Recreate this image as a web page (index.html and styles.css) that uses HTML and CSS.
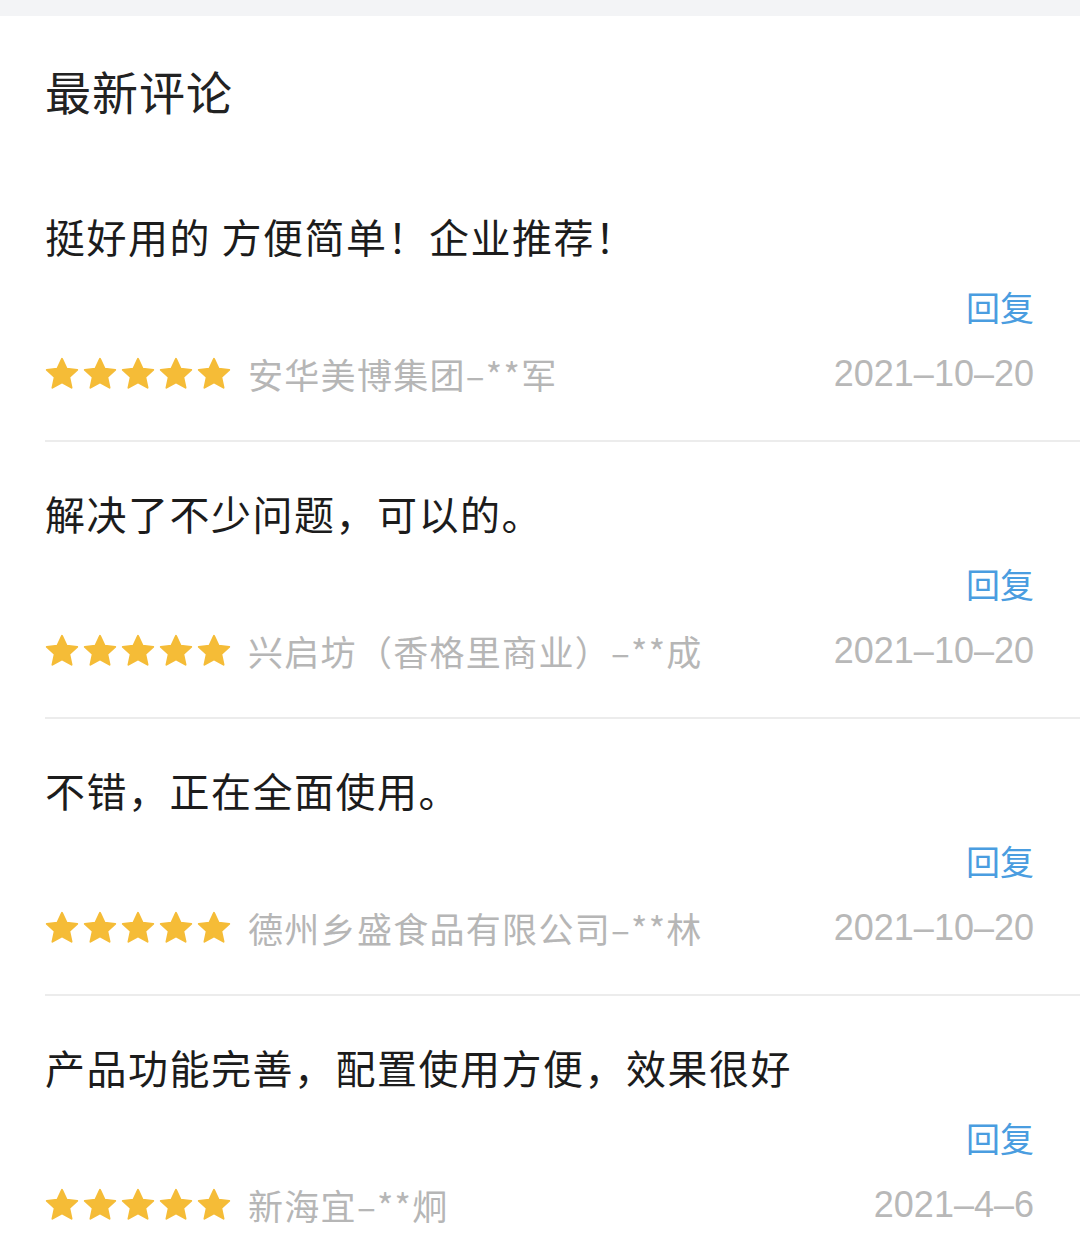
FILE: index.html
```html
<!DOCTYPE html>
<html lang="zh-CN">
<head>
    <meta charset="UTF-8">
    <meta name="viewport" content="width=device-width, initial-scale=1.0">
    <title>最新评论</title>
    <link rel="stylesheet" href="styles.css">
</head>
<body>

    <div class="top-bar"></div>

    <!-- Comments Section -->
    <section class="comments">
        <h2 class="comments-title">最新评论</h2>

        <div class="comment">
            <p class="comment-text">挺好用的 方便简单！企业推荐！</p>
            <div class="comment-reply"><a href="#">回复</a></div>
            <div class="comment-meta">
                <span class="stars">
                    <svg viewBox="0 0 24 24"><path d="M12 1.8l3.1 6.6 7.1.8-5.3 4.9 1.5 7.1L12 17.6l-6.4 3.6 1.5-7.1-5.3-4.9 7.1-.8z"/></svg>
                    <svg viewBox="0 0 24 24"><path d="M12 1.8l3.1 6.6 7.1.8-5.3 4.9 1.5 7.1L12 17.6l-6.4 3.6 1.5-7.1-5.3-4.9 7.1-.8z"/></svg>
                    <svg viewBox="0 0 24 24"><path d="M12 1.8l3.1 6.6 7.1.8-5.3 4.9 1.5 7.1L12 17.6l-6.4 3.6 1.5-7.1-5.3-4.9 7.1-.8z"/></svg>
                    <svg viewBox="0 0 24 24"><path d="M12 1.8l3.1 6.6 7.1.8-5.3 4.9 1.5 7.1L12 17.6l-6.4 3.6 1.5-7.1-5.3-4.9 7.1-.8z"/></svg>
                    <svg viewBox="0 0 24 24"><path d="M12 1.8l3.1 6.6 7.1.8-5.3 4.9 1.5 7.1L12 17.6l-6.4 3.6 1.5-7.1-5.3-4.9 7.1-.8z"/></svg>
                </span>
                <span class="author">安华美博集团–**军</span>
                <span class="date">2021–10–20</span>
            </div>
        </div>

        <div class="comment">
            <p class="comment-text">解决了不少问题，可以的。</p>
            <div class="comment-reply"><a href="#">回复</a></div>
            <div class="comment-meta">
                <span class="stars">
                    <svg viewBox="0 0 24 24"><path d="M12 1.8l3.1 6.6 7.1.8-5.3 4.9 1.5 7.1L12 17.6l-6.4 3.6 1.5-7.1-5.3-4.9 7.1-.8z"/></svg>
                    <svg viewBox="0 0 24 24"><path d="M12 1.8l3.1 6.6 7.1.8-5.3 4.9 1.5 7.1L12 17.6l-6.4 3.6 1.5-7.1-5.3-4.9 7.1-.8z"/></svg>
                    <svg viewBox="0 0 24 24"><path d="M12 1.8l3.1 6.6 7.1.8-5.3 4.9 1.5 7.1L12 17.6l-6.4 3.6 1.5-7.1-5.3-4.9 7.1-.8z"/></svg>
                    <svg viewBox="0 0 24 24"><path d="M12 1.8l3.1 6.6 7.1.8-5.3 4.9 1.5 7.1L12 17.6l-6.4 3.6 1.5-7.1-5.3-4.9 7.1-.8z"/></svg>
                    <svg viewBox="0 0 24 24"><path d="M12 1.8l3.1 6.6 7.1.8-5.3 4.9 1.5 7.1L12 17.6l-6.4 3.6 1.5-7.1-5.3-4.9 7.1-.8z"/></svg>
                </span>
                <span class="author">兴启坊（香格里商业）–**成</span>
                <span class="date">2021–10–20</span>
            </div>
        </div>

        <div class="comment">
            <p class="comment-text">不错，正在全面使用。</p>
            <div class="comment-reply"><a href="#">回复</a></div>
            <div class="comment-meta">
                <span class="stars">
                    <svg viewBox="0 0 24 24"><path d="M12 1.8l3.1 6.6 7.1.8-5.3 4.9 1.5 7.1L12 17.6l-6.4 3.6 1.5-7.1-5.3-4.9 7.1-.8z"/></svg>
                    <svg viewBox="0 0 24 24"><path d="M12 1.8l3.1 6.6 7.1.8-5.3 4.9 1.5 7.1L12 17.6l-6.4 3.6 1.5-7.1-5.3-4.9 7.1-.8z"/></svg>
                    <svg viewBox="0 0 24 24"><path d="M12 1.8l3.1 6.6 7.1.8-5.3 4.9 1.5 7.1L12 17.6l-6.4 3.6 1.5-7.1-5.3-4.9 7.1-.8z"/></svg>
                    <svg viewBox="0 0 24 24"><path d="M12 1.8l3.1 6.6 7.1.8-5.3 4.9 1.5 7.1L12 17.6l-6.4 3.6 1.5-7.1-5.3-4.9 7.1-.8z"/></svg>
                    <svg viewBox="0 0 24 24"><path d="M12 1.8l3.1 6.6 7.1.8-5.3 4.9 1.5 7.1L12 17.6l-6.4 3.6 1.5-7.1-5.3-4.9 7.1-.8z"/></svg>
                </span>
                <span class="author">德州乡盛食品有限公司–**林</span>
                <span class="date">2021–10–20</span>
            </div>
        </div>

        <div class="comment">
            <p class="comment-text">产品功能完善，配置使用方便，效果很好</p>
            <div class="comment-reply"><a href="#">回复</a></div>
            <div class="comment-meta">
                <span class="stars">
                    <svg viewBox="0 0 24 24"><path d="M12 1.8l3.1 6.6 7.1.8-5.3 4.9 1.5 7.1L12 17.6l-6.4 3.6 1.5-7.1-5.3-4.9 7.1-.8z"/></svg>
                    <svg viewBox="0 0 24 24"><path d="M12 1.8l3.1 6.6 7.1.8-5.3 4.9 1.5 7.1L12 17.6l-6.4 3.6 1.5-7.1-5.3-4.9 7.1-.8z"/></svg>
                    <svg viewBox="0 0 24 24"><path d="M12 1.8l3.1 6.6 7.1.8-5.3 4.9 1.5 7.1L12 17.6l-6.4 3.6 1.5-7.1-5.3-4.9 7.1-.8z"/></svg>
                    <svg viewBox="0 0 24 24"><path d="M12 1.8l3.1 6.6 7.1.8-5.3 4.9 1.5 7.1L12 17.6l-6.4 3.6 1.5-7.1-5.3-4.9 7.1-.8z"/></svg>
                    <svg viewBox="0 0 24 24"><path d="M12 1.8l3.1 6.6 7.1.8-5.3 4.9 1.5 7.1L12 17.6l-6.4 3.6 1.5-7.1-5.3-4.9 7.1-.8z"/></svg>
                </span>
                <span class="author">新海宜–**炯</span>
                <span class="date">2021–4–6</span>
            </div>
        </div>
    </section>

</body>
</html>
```

FILE: styles.css
```css
/* General page styles */
body {
    font-family: 'Noto Sans CJK SC', 'Noto Sans', sans-serif;
    margin: 0;
    padding: 0;
    background-color: #ffffff;
    color: #1c1c1c;
    overflow: hidden;
}

/* Grey strip above the card */
.top-bar {
    height: 16px;
    background-color: #f3f4f6;
}

/* Comments list */
.comments {
    padding-left: 45px;
}

.comments-title {
    margin: 42px 0 43px;
    font-size: 46px;
    line-height: 64px;
    font-weight: normal;
    letter-spacing: 1px;
    color: #222;
}

.comment {
    padding: 43px 46px 42px 0;
    border-bottom: 2px solid #ececec;
}

.comment:last-child {
    border-bottom: none;
}

.comment-text {
    margin: 0;
    font-size: 40px;
    line-height: 56px;
    letter-spacing: 1.5px;
    color: #1c1c1c;
}

.comment-reply {
    margin-top: 19px;
    text-align: right;
    font-size: 34px;
    line-height: 48px;
}

.comment-reply a {
    color: #4a9de0;
    text-decoration: none;
}

/* Stars, author and date */
.comment-meta {
    display: flex;
    align-items: center;
    margin-top: 19px;
    height: 48px;
}

.stars {
    display: flex;
    gap: 2px;
    margin-right: 16px;
    margin-left: -1px;
}

.stars svg {
    width: 36px;
    height: 36px;
    fill: #f5bc37;
    stroke: #f5bc37;
    stroke-width: 1.2;
    stroke-linejoin: round;
}

.author {
    font-size: 35px;
    line-height: 48px;
    letter-spacing: 1.3px;
    color: #b6b6b6;
    white-space: nowrap;
}

.date {
    margin-left: auto;
    font-family: 'Liberation Sans', 'Noto Sans CJK SC', sans-serif;
    font-size: 36px;
    line-height: 48px;
    color: #b8b8b8;
}
```
